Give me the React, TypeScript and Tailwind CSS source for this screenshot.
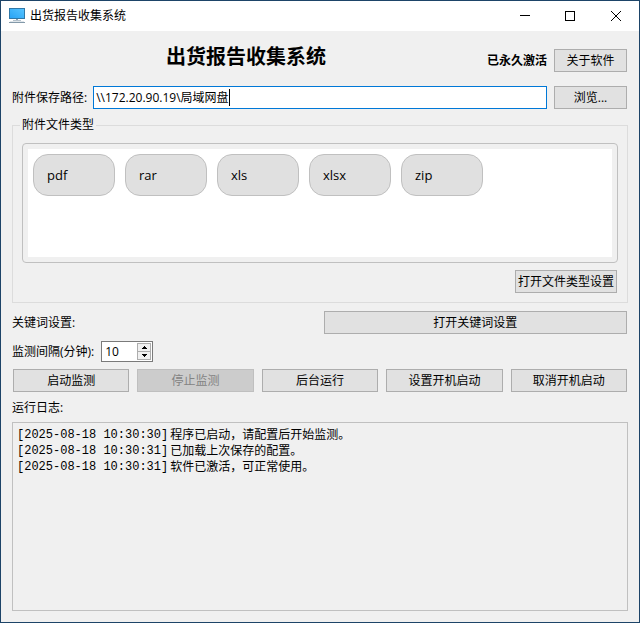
import React, { useState } from "react";
import clsx from "clsx";

const FILE_TYPES = ["pdf", "rar", "xls", "xlsx", "zip"];

const ACTIONS = [
  { label: "启动监测" },
  { label: "停止监测", disabled: true },
  { label: "后台运行" },
  { label: "设置开机启动" },
  { label: "取消开机启动" },
];

const LOGS = [
  { time: "[2025-08-18 10:30:30]", text: "程序已启动，请配置后开始监测。" },
  { time: "[2025-08-18 10:30:31]", text: "已加载上次保存的配置。" },
  { time: "[2025-08-18 10:30:31]", text: "软件已激活，可正常使用。" },
];

interface WinButtonProps extends React.ButtonHTMLAttributes<HTMLButtonElement> {
  children: React.ReactNode;
}

const WinButton: React.FC<WinButtonProps> = ({ children, className, disabled, ...rest }) => (
  <button
    type="button"
    disabled={disabled}
    className={clsx(
      "flex h-[23px] items-center justify-center whitespace-nowrap border",
      disabled
        ? "border-[#bfbfbf] bg-[#cccccc] text-[#838383]"
        : "border-[#adadad] bg-[#e1e1e1]",
      className
    )}
    {...rest}
  >
    {children}
  </button>
);

const MonitorIcon = () => (
  <svg width="16" height="16" viewBox="0 0 16 16" shapeRendering="crispEdges" aria-hidden="true">
    <defs>
      <linearGradient id="screen" x1="0" y1="1" x2="1" y2="0">
        <stop offset="0" stopColor="#28a4f5" />
        <stop offset="1" stopColor="#55c3ff" />
      </linearGradient>
    </defs>
    <rect x="0" y="0" width="16" height="11" fill="#2f78a8" />
    <rect x="1" y="1" width="14" height="9" fill="url(#screen)" />
    <rect x="7" y="11" width="2" height="1" fill="#8aa0b0" />
    <rect x="4" y="12" width="8" height="1" fill="#b4c1cb" />
    <rect x="1" y="13" width="14" height="1" fill="#dfe6eb" />
    <rect x="0" y="14" width="16" height="1" fill="#8399a9" />
  </svg>
);

const TitleBar = () => (
  <header className="flex h-[30px] items-center bg-white pl-2">
    <MonitorIcon />
    <span className="ml-[5px] flex-1">出货报告收集系统</span>
    <button type="button" aria-label="最小化" className="flex h-full w-11 items-center justify-center">
      <svg width="10" height="10" shapeRendering="crispEdges">
        <rect y="4" width="10" height="1" />
      </svg>
    </button>
    <button type="button" aria-label="最大化" className="flex h-full w-[46px] items-center justify-center">
      <svg width="10" height="10" fill="none" stroke="#000" shapeRendering="crispEdges">
        <rect x="0.5" y="0.5" width="9" height="9" />
      </svg>
    </button>
    <button type="button" aria-label="关闭" className="flex h-full w-[46px] items-center justify-center">
      <svg width="10" height="10" stroke="#000">
        <path d="M0 0L10 10M10 0L0 10" />
      </svg>
    </button>
  </header>
);

const FileTypes = () => (
  <fieldset className="mt-2 flex flex-col border border-[#dcdcdc] px-[9px] pb-[9px]">
    <legend className="-ml-[2px] px-[2px] leading-4">附件文件类型</legend>
    <div className="mt-[10px] rounded border border-[#c0c0c0] p-[5px]">
      <ul className="flex h-[108px] flex-wrap content-start gap-[10px] bg-white p-[5px]">
        {FILE_TYPES.map((type) => (
          <li
            key={type}
            className="flex h-[42px] w-[82px] items-center rounded-[15px] border border-[#c0c0c0] bg-[#e0e0e0] pl-[13px] text-[13px]"
          >
            {type}
          </li>
        ))}
      </ul>
    </div>
    <WinButton className="mt-[7px] mr-px w-[102px] self-end">打开文件类型设置</WinButton>
  </fieldset>
);

const IntervalBox = () => {
  const [minutes, setMinutes] = useState(10);

  return (
    <div className="flex h-[21px] w-[52px] border border-[#7a7a7a] bg-white p-px">
      <input
        id="interval"
        type="text"
        inputMode="numeric"
        value={minutes}
        onChange={(e) => setMinutes(Number(e.target.value) || 0)}
        className="min-w-0 flex-1 pl-[2px] text-[12px] outline-none"
      />
      <div className="flex w-[14px] flex-col">
        <button
          type="button"
          aria-label="增加"
          onClick={() => setMinutes(minutes + 1)}
          className="flex flex-1 items-center justify-center border border-b-0 border-[#adadad] bg-[#f0f0f0]"
        >
          <svg width="5" height="3" viewBox="0 0 5 3" shapeRendering="crispEdges">
            <path d="M2 0h1v1h1v1h1v1H0V2h1V1h1z" />
          </svg>
        </button>
        <button
          type="button"
          aria-label="减少"
          onClick={() => setMinutes(Math.max(1, minutes - 1))}
          className="flex flex-1 items-center justify-center border border-[#adadad] bg-[#f0f0f0]"
        >
          <svg width="5" height="3" viewBox="0 0 5 3" shapeRendering="crispEdges">
            <path d="M0 0h5v1H4v1H3v1H2V2H1V1H0z" />
          </svg>
        </button>
      </div>
    </div>
  );
};

const App = () => {
  const [path, setPath] = useState("\\\\172.20.90.19\\局域网盘");

  return (
    <div className="flex min-h-screen flex-col border border-[#1d4468] bg-[#f0f0f0] font-['Open_Sans','Noto_Sans_CJK_SC',sans-serif] text-[12px] leading-4 text-black">
      <TitleBar />
      <main className="flex flex-1 flex-col px-[11px] pt-[11px] pb-[11px]">
        <div className="flex h-[37px] items-center pr-px">
          <h1 className="flex-1 pb-[7px] text-center text-[20px] leading-[30px] font-bold">出货报告收集系统</h1>
          <strong className="ml-[7px] font-bold">已永久激活</strong>
          <WinButton className="ml-[7px] w-[73px]">关于软件</WinButton>
        </div>

        <div className="mt-[7px] flex items-center pr-px">
          <label htmlFor="save-path">附件保存路径:</label>
          <div className="ml-[6px] flex h-[23px] min-w-0 flex-1 items-center border border-[#0078d7] bg-white pl-[2px]">
            <input
              id="save-path"
              type="text"
              value={path}
              onChange={(e) => setPath(e.target.value)}
              className="[field-sizing:content] min-w-0 outline-none"
            />
            <span className="h-[17px] w-px bg-black" />
          </div>
          <WinButton className="ml-[7px] w-[73px]">浏览...</WinButton>
        </div>

        <FileTypes />

        <div className="mt-2 flex items-center pr-px">
          <span className="flex-1">关键词设置:</span>
          <WinButton className="ml-[10px] flex-1">打开关键词设置</WinButton>
        </div>

        <div className="mt-[7px] flex items-center gap-[7px]">
          <label htmlFor="interval">监测间隔(分钟):</label>
          <IntervalBox />
        </div>

        <div className="mt-[7px] grid grid-cols-5 gap-2 px-px">
          {ACTIONS.map((action) => (
            <WinButton key={action.label} disabled={action.disabled}>
              {action.label}
            </WinButton>
          ))}
        </div>

        <h2 className="mt-2">运行日志:</h2>
        <div role="log" className="mt-[6px] flex-1 border border-[#c0c0c0] px-1 py-1">
          {LOGS.map((log, i) => (
            <p key={i} className="flex gap-[2px]">
              <span className="font-['Liberation_Mono',monospace]">{log.time}</span>
              <span>{log.text}</span>
            </p>
          ))}
        </div>
      </main>
    </div>
  );
};

export default App;
